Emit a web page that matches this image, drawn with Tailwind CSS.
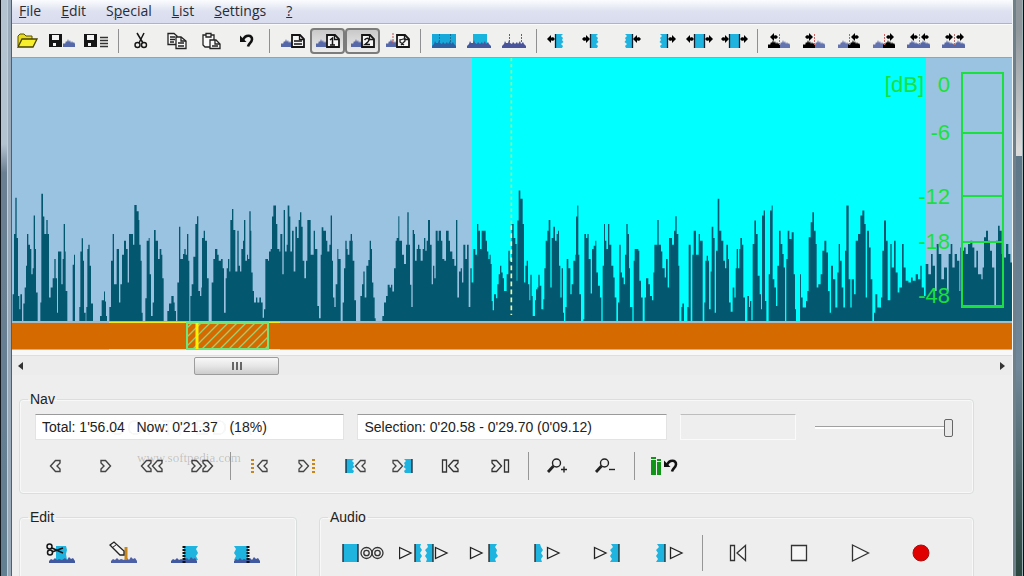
<!DOCTYPE html>
<html lang="en">
<head>
    <meta charset="UTF-8">
    <meta name="viewport" content="width=device-width, initial-scale=1.0">
    <title>Audio Editor</title>
    <script src="https://cdn.jsdelivr.net/npm/@tailwindcss/browser@4"></script>
</head>
<body class="h-screen overflow-hidden bg-[#eeeeee] font-['Liberation_Sans',Arial,sans-serif] text-[#222222]">

    <!-- Shared icon parts -->
    <svg class="absolute w-0 h-0" aria-hidden="true">
        <defs>
            <path id="wave" d="M0 8V5L1 4L2 5L3 2L4 3L5 0L6 3L7 1L8 4L9 2L10 4L11 3L12 5V8Z"/>
            <path id="wave-wide" d="M0 8V6L2 4L3 1L4 3L6 3L7 0L8 3L10 4L11 2L13 4L15 2L16 4L18 1L19 4L21 2L22 4L24 6V8Z"/>
            <path id="wave-low" d="M0 7V5L2 3L4 4L6 2L8 4L10 3L13 4L16 2L18 4L20 1L22 3L24 2L26 5V7Z"/>
            <path id="arrow-l" d="M0 4L4 0V2.500H5L6 2L8 4L6 6L5 5.500H4V8Z"/>
            <path id="arrow-r" d="M8 4L4 0V2.500H3L2 2L0 4L2 6L3 5.500H4V8Z"/>
            <path id="block-r" d="M0 0H8L6 2L8 4L7 6L8.500 8L6 10L8 12L7 14H0Z"/>
            <path id="block-l" d="M9 0H1L3 2L1 4L2 6L0.500 8L3 10L1 12L2 14H9Z"/>
            <path id="chev-l" d="M0.500 6L5.500 0.500H10V3L7 6L10 9V11.500H5.500Z"/>
            <path id="chev-r" d="M10.500 6L5.500 0.500H1V3L4 6L1 9V11.500H5.500Z"/>
            <path id="play" d="M0.500 0.500L12 6L0.500 11.500Z"/>
            <g id="undo">
                <path d="M0 1.500V8H6.500Z" fill="#111"/>
                <path d="M3 6C5 0.500 12.500 0.500 12 5.500C11.800 8.500 8.500 9.500 8 12.500" fill="none" stroke="#111" stroke-width="2.600"/>
            </g>
            <g id="floppy">
                <path d="M0 0H13V13H0Z" fill="#151515"/>
                <path d="M3 1H10V6H3ZM4 9H7V12H4Z" fill="#f4f4f4"/>
            </g>
            <g id="page">
                <path d="M1 1H9L13 5V13H1Z" fill="#f6f6f6" stroke="#151515" stroke-width="1.800"/>
                <path d="M8.500 1V5.500H13" fill="none" stroke="#151515" stroke-width="1.300"/>
            </g>
        </defs>
    </svg>

    <div class="flex h-full">
        <!-- Left window frame -->
        <div class="w-3 shrink-0 flex border-l border-[#10161c]">
            <div class="grow bg-linear-to-b from-[#b4c3d0] from-25% via-[#6b7f92] via-30% to-[#637f92]"></div>
            <div class="w-1 bg-[#9aaab8] border-l border-[#c3d0da]"></div>
            <div class="w-px bg-[#4f5f6c]"></div>
        </div>

        <div class="grow min-w-0">
            <!-- Menu bar -->
            <nav class="h-6 flex items-start gap-5 pl-[7px] border-b border-[#b3b3bb] bg-linear-to-b from-[#fbfcfe] via-[#dde1f0] to-[#d8dcee] font-['Open_Sans',sans-serif] text-sm leading-[22px] text-[#2b2b33]">
                <button><u>F</u>ile</button>
                <button><u>E</u>dit</button>
                <button>S<u>p</u>ecial</button>
                <button><u>L</u>ist</button>
                <button><u>S</u>ettings</button>
                <button><u>?</u></button>
            </nav>

            <!-- Toolbar -->
            <div class="h-[33px] flex items-center bg-[#f0f0ee] border-t border-[#fafafa]">
                <button class="w-[31px] flex justify-center" aria-label="Open"><svg class="w-7 h-[18px]" viewBox="0 0 28 18">
                    <path d="M4 14V4L6 2H10L12 4H18V7" fill="#e8dc18" stroke="#5b5200"/><path d="M4 15L8 7H23L19 15Z" fill="#f7ef2c" stroke="#4a4300" stroke-width="1.300"/></svg></button>
                <button class="w-[35px] flex justify-center" aria-label="Save wave"><svg class="w-7 h-[18px]" viewBox="0 0 28 18">
                    <use href="#floppy" x="2" y="2"/><use href="#wave" x="16" y="7" fill="#5668a8"/></svg></button>
                <button class="w-[35px] flex justify-center" aria-label="Save list"><svg class="w-7 h-[18px]" viewBox="0 0 28 18">
                    <use href="#floppy" x="2" y="2"/><path d="M18 5.500H26M18 8.500H26M18 11.500H26M18 14.500H26" stroke="#333" stroke-width="1.300"/></svg></button>
                <div class="w-[11px] flex justify-center"><span class="w-px h-6 bg-[#909090]"></span></div>
                <button class="w-[35px] flex justify-center" aria-label="Cut"><svg class="w-7 h-[18px]" viewBox="0 0 28 18" fill="none" stroke="#151515">
                    <path d="M9 1L15 11M16 1L11 11" stroke-width="1.500"/><circle cx="9.500" cy="13" r="2.500" stroke-width="1.400"/><circle cx="16" cy="13" r="2.500" stroke-width="1.400"/></svg></button>
                <button class="w-[35px] flex justify-center" aria-label="Copy"><svg class="w-7 h-[18px]" viewBox="0 0 28 18" fill="#f8f8f8" stroke="#222" stroke-width="1.300">
                    <path d="M5 1.500H11L14 4V12.500H5Z"/><path d="M7 5H12M7 7.500H12M7 10H11"/><path d="M13 5H18L23 9V16.500H13Z"/><path d="M18 5V9H23M15 11H21M15 14H21" fill="none"/></svg></button>
                <button class="w-[35px] flex justify-center" aria-label="Paste"><svg class="w-7 h-[18px]" viewBox="0 0 28 18" fill="#f8f8f8" stroke="#222" stroke-width="1.300">
                    <path d="M5 3H16V15H7L5 13Z"/><path d="M8 1.500H13V5H8Z"/><path d="M12 8H18L22 12V16.500H12Z"/><path d="M17 8V12H22M14 14H20" fill="none"/></svg></button>
                <button class="w-[35px] flex justify-center" aria-label="Undo"><svg class="w-7 h-[18px]" viewBox="0 0 28 18">
                    <use href="#undo" x="7" y="2"/></svg></button>
                <div class="w-[11px] flex justify-center"><span class="w-px h-6 bg-[#909090]"></span></div>
                <button class="w-[35px] flex justify-center" aria-label="Show list"><svg class="w-7 h-[18px]" viewBox="0 0 28 18">
                    <use href="#wave" x="2" y="7" fill="#5668a8"/><use href="#page" x="12" y="2"/><path d="M15 9H23M15 12H23" stroke="#151515" stroke-width="1.300"/></svg></button>
                <button class="w-[35px] h-[26px] flex justify-center items-center rounded border-2 border-[#7c7c7c] bg-linear-to-b from-[#c9c9c9] to-[#ececec]" aria-label="List 1" aria-pressed="true"><svg class="w-7 h-[18px]" viewBox="0 0 28 18">
                    <use href="#wave" x="2" y="7" fill="#5668a8"/><use href="#page" x="12" y="2"/><path d="M16 8L18.500 6V13M16 13H21" fill="none" stroke="#151515" stroke-width="1.500"/></svg></button>
                <button class="w-[35px] h-[26px] flex justify-center items-center rounded border-2 border-[#7c7c7c] bg-linear-to-b from-[#c9c9c9] to-[#ececec]" aria-label="List 2" aria-pressed="true"><svg class="w-7 h-[18px]" viewBox="0 0 28 18">
                    <use href="#wave" x="2" y="7" fill="#5668a8"/><use href="#page" x="12" y="2"/><path d="M15.500 8Q18 5 20 7.500Q20 9.500 16 12.500H21" fill="none" stroke="#151515" stroke-width="1.500"/></svg></button>
                <button class="w-[35px] flex justify-center" aria-label="Find in list"><svg class="w-7 h-[18px]" viewBox="0 0 28 18">
                    <use href="#wave" x="2" y="7" fill="#5668a8"/><path d="M9 1V12" stroke="#c05050" stroke-dasharray="2 1"/><use href="#page" x="12" y="2"/><path d="M16 7V10L20 13M16 8L21 6.500V9L17 13" fill="none" stroke="#222" stroke-width="1.300"/></svg></button>
                <div class="w-[11px] flex justify-center"><span class="w-px h-6 bg-[#909090]"></span></div>
                <button class="w-[35px] flex justify-center" aria-label="Select all"><svg class="w-7 h-[18px]" viewBox="0 0 28 18">
                    <path d="M2 2H26V16H2Z" fill="#17a9d9"/><path d="M9.500 2V12M20.500 2V12" stroke="#186f93" stroke-dasharray="2 1"/><use href="#wave-wide" x="2" y="8" fill="#2c62a4"/></svg></button>
                <button class="w-[35px] flex justify-center" aria-label="Select between marks"><svg class="w-7 h-[18px]" viewBox="0 0 28 18">
                    <path d="M8 2H22V14H8Z" fill="#17b4de"/><use href="#wave-wide" x="2" y="8" fill="#41599f"/></svg></button>
                <button class="w-[35px] flex justify-center" aria-label="Select none"><svg class="w-7 h-[18px]" viewBox="0 0 28 18">
                    <path d="M9.500 2V11M21.500 2V11" stroke="#b04545" stroke-dasharray="2 1"/><use href="#wave-wide" x="2" y="8" fill="#49549a"/></svg></button>
                <div class="w-[11px] flex justify-center"><span class="w-px h-6 bg-[#909090]"></span></div>
                <button class="w-[35px] flex justify-center" aria-label="Selection start left"><svg class="w-7 h-[18px]" viewBox="0 0 28 18">
                    <use href="#arrow-l" x="1" y="3"/><use href="#block-r" x="9" y="2" fill="#1fb4e0"/><path d="M9.500 2V16" stroke="#123" stroke-width="1.300"/></svg></button>
                <button class="w-[35px] flex justify-center" aria-label="Selection start right"><svg class="w-7 h-[18px]" viewBox="0 0 28 18">
                    <use href="#arrow-r" x="1" y="3"/><use href="#block-r" x="9" y="2" fill="#1fb4e0"/><path d="M9.500 2V16" stroke="#123" stroke-width="1.300"/></svg></button>
                <button class="w-[35px] flex justify-center" aria-label="Selection end left"><svg class="w-7 h-[18px]" viewBox="0 0 28 18">
                    <use href="#block-l" x="8" y="2" fill="#1fb4e0"/><path d="M16.500 2V16" stroke="#123" stroke-width="1.300"/><use href="#arrow-l" x="17" y="3"/></svg></button>
                <button class="w-[35px] flex justify-center" aria-label="Selection end right"><svg class="w-7 h-[18px]" viewBox="0 0 28 18">
                    <use href="#block-l" x="8" y="2" fill="#1fb4e0"/><path d="M16.500 2V16" stroke="#123" stroke-width="1.300"/><use href="#arrow-r" x="17" y="3"/></svg></button>
                <button class="w-[35px] flex justify-center" aria-label="Selection left"><svg class="w-7 h-[18px]" viewBox="0 0 28 18">
                    <use href="#arrow-l" x="0" y="3"/><path d="M8.500 2H18.500V16H8.500Z" fill="#1fb4e0"/><path d="M8.500 2V16M18.500 2V16" stroke="#123" stroke-width="1.300"/><use href="#arrow-r" x="19" y="3"/></svg></button>
                <button class="w-[35px] flex justify-center" aria-label="Selection right"><svg class="w-7 h-[18px]" viewBox="0 0 28 18">
                    <use href="#arrow-r" x="0" y="3"/><path d="M8.500 2H18.500V16H8.500Z" fill="#1fb4e0"/><path d="M8.500 2V16M18.500 2V16" stroke="#123" stroke-width="1.300"/><use href="#arrow-r" x="19" y="3"/></svg></button>
                <div class="w-[11px] flex justify-center"><span class="w-px h-6 bg-[#909090]"></span></div>
                <button class="w-[35px] flex justify-center" aria-label="Fade before, left"><svg class="w-7 h-[18px]" viewBox="0 0 28 18">
                    <use href="#wave" x="11" y="8" fill="#6474b0"/><use href="#wave" x="1" y="8"/><path d="M12.500 2V13" stroke="#d06060" stroke-dasharray="2 1"/><use href="#arrow-l" x="3" y="1"/></svg></button>
                <button class="w-[35px] flex justify-center" aria-label="Fade before, right"><svg class="w-7 h-[18px]" viewBox="0 0 28 18">
                    <use href="#wave" x="11" y="8" fill="#6474b0"/><use href="#wave" x="1" y="8"/><path d="M12.500 2V13" stroke="#d06060" stroke-dasharray="2 1"/><use href="#arrow-r" x="3" y="1"/></svg></button>
                <button class="w-[35px] flex justify-center" aria-label="Fade after, left"><svg class="w-7 h-[18px]" viewBox="0 0 28 18">
                    <use href="#wave" x="1" y="8" fill="#6474b0"/><use href="#wave" x="11" y="8"/><path d="M12.500 2V13" stroke="#d06060" stroke-dasharray="2 1"/><use href="#arrow-l" x="14" y="1"/></svg></button>
                <button class="w-[35px] flex justify-center" aria-label="Fade after, right"><svg class="w-7 h-[18px]" viewBox="0 0 28 18">
                    <use href="#wave" x="1" y="8" fill="#6474b0"/><use href="#wave" x="11" y="8"/><path d="M12.500 2V13" stroke="#d06060" stroke-dasharray="2 1"/><use href="#arrow-r" x="14" y="1"/></svg></button>
                <button class="w-[35px] flex justify-center" aria-label="Move mark left"><svg class="w-7 h-[18px]" viewBox="0 0 28 18">
                    <use href="#wave" x="0" y="8" fill="#5668a8"/><use href="#wave" x="11" y="8" fill="#5668a8"/><path d="M12.500 2V13" stroke="#b07070" stroke-dasharray="2 1"/><use href="#arrow-l" x="3" y="1"/><use href="#arrow-l" x="14" y="1"/></svg></button>
                <button class="w-[35px] flex justify-center" aria-label="Move mark right"><svg class="w-7 h-[18px]" viewBox="0 0 28 18">
                    <use href="#wave" x="0" y="8" fill="#5668a8"/><use href="#wave" x="11" y="8" fill="#5668a8"/><path d="M12.500 2V13" stroke="#b07070" stroke-dasharray="2 1"/><use href="#arrow-r" x="3" y="1"/><use href="#arrow-r" x="14" y="1"/></svg></button>
            </div>

            <!-- Waveform -->
            <div class="relative border-t border-[#8fa5b0]">
                <svg class="block w-full h-[263px]" viewBox="0 0 3000 786" preserveAspectRatio="none">
                    <rect width="3000" height="786" fill="#9ac3e2"/>
                    <rect x="1380" width="1362" height="786" fill="#00ffff"/>
                    <path id="peaks" fill="#03586f"/>
                    <path d="M1498 0V500" stroke="#8ff590" stroke-width="5" stroke-dasharray="10 8"/>
                    <path d="M1498 500V768" stroke="#f5f7a0" stroke-width="5" stroke-dasharray="14 10"/>
                </svg>
                <!-- Level meter scale -->
                <div class="absolute inset-y-0 right-0 w-32 text-[22px] leading-6 text-[#19e03f]">
                    <span class="absolute right-[88px] top-[15px]">[dB]</span>
                    <span class="absolute right-[62px] top-[15px]">0</span>
                    <span class="absolute right-[62px] top-[63px]">-6</span>
                    <span class="absolute right-[62px] top-[127px]">-12</span>
                    <span class="absolute right-[62px] top-[172px]">-18</span>
                    <span class="absolute right-[62px] top-[226px]">-48</span>
                    <svg class="absolute right-2 top-[14px] w-[43px] h-[237px]" viewBox="0 0 43 237" fill="none" stroke="#19e03f" stroke-width="2">
                        <path d="M1 1H42V235H1ZM1 61H42M1 124H42M1 170H42M1 234H42"/>
                    </svg>
                </div>
            </div>

            <!-- Overview strip -->
            <div class="pt-[2px] pb-px bg-[#a9b9bd]">
                <svg class="block w-full h-[26px] overflow-visible bg-[#d46a00]" viewBox="0 0 1000 26" preserveAspectRatio="none">
                    <defs>
                        <pattern id="hatch" width="9" height="9" patternUnits="userSpaceOnUse">
                            <path d="M-1 10L10 -1M-1 1L1 -1M8 10L10 8" stroke="#9fd070" stroke-width="1.300"/>
                        </pattern>
                    </defs>
                    <path d="M97 -0.500H268M97 26.500H268" stroke="#f3ea1c"/>
                    <rect x="175" y="0" width="81" height="26" fill="url(#hatch)" stroke="#6fe57c" stroke-width="2"/>
                    <path d="M185 0V26" stroke="#ffef00" stroke-width="3"/>
                </svg>
            </div>

            <!-- Scrollbar -->
            <div class="border-t-[5px] border-[#f8f8f8]">
                <div class="h-5 flex items-center border-t border-[#dedede] bg-[#ececec]">
                    <button class="w-4 flex justify-center" aria-label="Scroll left"><svg class="w-2 h-2" viewBox="0 0 8 8"><path d="M2 4L7 0V8Z" fill="#333"/></svg></button>
                    <div class="grow grid grid-cols-[166fr_85fr_717fr]">
                        <button class="col-start-2 h-[18px] flex justify-center items-center gap-[2px] rounded-xs border border-[#9c9c9c] bg-linear-to-b from-[#f8f8f8] via-[#e6e6e6] to-[#cccccc]" aria-label="Scroll">
                            <span class="w-[2px] h-2 bg-[#666666]"></span><span class="w-[2px] h-2 bg-[#666666]"></span><span class="w-[2px] h-2 bg-[#666666]"></span>
                        </button>
                    </div>
                    <button class="w-4 flex justify-center" aria-label="Scroll right"><svg class="w-2 h-2" viewBox="0 0 8 8"><path d="M5 4L0 0V8Z" fill="#333"/></svg></button>
                </div>
            </div>

            <div class="ml-[7px] mr-[38px] mt-4">
                <!-- Nav group -->
                <fieldset class="relative h-[103px] rounded border border-[#d8dfdd] shadow-[inset_0_0_0_1px_#f8f8f8]">
                    <legend class="ml-2 px-[2px] text-sm leading-4">Nav</legend>
                    <div class="flex items-center gap-[13px] mt-[7px] pl-[15px] pr-5">
                        <input type="text" readonly aria-label="Position" value="Total: 1'56.04   Now: 0'21.37   (18%)" class="grow-[294] basis-0 min-w-0 h-[26px] px-[6px] bg-white border border-t-[#9a9a9a] border-[#e3e3e3] text-sm whitespace-pre">
                        <input type="text" readonly aria-label="Selection" value="Selection: 0'20.58 - 0'29.70 (0'09.12)" class="grow-[294] basis-0 min-w-0 h-[26px] px-[6px] bg-white border border-t-[#9a9a9a] border-[#e3e3e3] text-sm">
                        <input type="text" readonly aria-label="Status" class="grow-[114] basis-0 min-w-0 h-[26px] bg-[#eeeeee] border border-[#fafafa] border-t-[#bdbdbd]">
                        <input type="range" min="0" max="100" value="100" aria-label="Volume" class="ml-[6px] grow-[137] basis-0 min-w-0 h-5 appearance-none bg-transparent [&::-webkit-slider-runnable-track]:h-[3px] [&::-webkit-slider-runnable-track]:bg-white [&::-webkit-slider-runnable-track]:border-t [&::-webkit-slider-runnable-track]:border-[#a0a0a0] [&::-webkit-slider-thumb]:appearance-none [&::-webkit-slider-thumb]:w-[9px] [&::-webkit-slider-thumb]:h-[18px] [&::-webkit-slider-thumb]:-mt-2 [&::-webkit-slider-thumb]:rounded-xs [&::-webkit-slider-thumb]:border [&::-webkit-slider-thumb]:border-[#666666] [&::-webkit-slider-thumb]:bg-[#e9e9e9]">
                    </div>
                    <div class="absolute left-[90px] top-[9px] text-[22px] leading-6 tracking-widest text-black/5">SOFTPEDIA</div>
                    <div class="absolute left-[117px] top-[43px] font-['Liberation_Serif',serif] text-[13px] leading-4 text-black/20">www.softpedia.com</div>
                    <div class="flex items-center pl-[13px] mt-3 h-7">
                        <button class="w-12 flex justify-center" aria-label="Back"><svg class="w-8 h-[18px]" viewBox="0 0 32 18" fill="#eee" stroke="#444" stroke-width="1.400"><use href="#chev-l" x="9" y="3"/></svg></button>
                        <button class="w-12 flex justify-center" aria-label="Forward"><svg class="w-8 h-[18px]" viewBox="0 0 32 18" fill="#eee" stroke="#444" stroke-width="1.400"><use href="#chev-r" x="11" y="3"/></svg></button>
                        <button class="w-12 flex justify-center" aria-label="Fast back"><svg class="w-8 h-[18px]" viewBox="0 0 32 18" fill="#eee" stroke="#444" stroke-width="1.400"><use href="#chev-l" x="4" y="3"/><use href="#chev-l" x="15" y="3"/></svg></button>
                        <button class="w-12 flex justify-center" aria-label="Fast forward"><svg class="w-8 h-[18px]" viewBox="0 0 32 18" fill="#eee" stroke="#444" stroke-width="1.400"><use href="#chev-r" x="6" y="3"/><use href="#chev-r" x="17" y="3"/></svg></button>
                        <div class="w-[10px] flex justify-center"><span class="w-px h-7 bg-[#969696]"></span></div>
                        <button class="w-12 flex justify-center" aria-label="Previous mark"><svg class="w-8 h-[18px]" viewBox="0 0 32 18" fill="#eee" stroke="#444" stroke-width="1.300"><path d="M9.500 2V17" stroke="#c8861a" stroke-width="3" stroke-dasharray="2 2"/><use href="#chev-l" x="14" y="3"/></svg></button>
                        <button class="w-12 flex justify-center" aria-label="Next mark"><svg class="w-8 h-[18px]" viewBox="0 0 32 18" fill="#eee" stroke="#444" stroke-width="1.300"><use href="#chev-r" x="7" y="3"/><path d="M22.500 2V17" stroke="#c8861a" stroke-width="3" stroke-dasharray="2 2"/></svg></button>
                        <button class="w-12 flex justify-center" aria-label="To selection start"><svg class="w-8 h-[18px]" viewBox="0 0 32 18" fill="#eee" stroke="#444" stroke-width="1.300"><use href="#block-r" x="7" y="2" fill="#1fb4e0" stroke="none"/><path d="M7 2V16" stroke="#123"/><use href="#chev-l" x="16" y="3"/></svg></button>
                        <button class="w-12 flex justify-center" aria-label="To selection end"><svg class="w-8 h-[18px]" viewBox="0 0 32 18" fill="#eee" stroke="#444" stroke-width="1.300"><use href="#chev-r" x="5" y="3"/><use href="#block-l" x="16" y="2" fill="#1fb4e0" stroke="none"/><path d="M25 2V16" stroke="#123"/></svg></button>
                        <button class="w-12 flex justify-center" aria-label="To start"><svg class="w-8 h-[18px]" viewBox="0 0 32 18" fill="#eee" stroke="#333" stroke-width="1.300"><path d="M7.500 3H11.500V15H7.500Z"/><use href="#chev-l" x="13" y="3"/></svg></button>
                        <button class="w-12 flex justify-center" aria-label="To end"><svg class="w-8 h-[18px]" viewBox="0 0 32 18" fill="#eee" stroke="#333" stroke-width="1.300"><use href="#chev-r" x="8" y="3"/><path d="M21.500 3H25.500V15H21.500Z"/></svg></button>
                        <div class="w-[10px] flex justify-center"><span class="w-px h-7 bg-[#969696]"></span></div>
                        <button class="w-12 flex justify-center" aria-label="Zoom in"><svg class="w-8 h-[18px]" viewBox="0 0 32 18" fill="none" stroke="#222"><circle cx="15.500" cy="6" r="4" stroke-width="1.400"/><path d="M12.500 9L7 15" stroke-width="2.800"/><path d="M20 12.500H26M23 9.500V15.500" stroke-width="1.400"/></svg></button>
                        <button class="w-12 flex justify-center" aria-label="Zoom out"><svg class="w-8 h-[18px]" viewBox="0 0 32 18" fill="none" stroke="#222"><circle cx="15.500" cy="6" r="4" stroke-width="1.400"/><path d="M12.500 9L7 15" stroke-width="2.800"/><path d="M20 12.500H26" stroke-width="1.400"/></svg></button>
                        <div class="w-[10px] flex justify-center"><span class="w-px h-7 bg-[#969696]"></span></div>
                        <button class="w-14 flex justify-center" aria-label="Reset level"><svg class="w-8 h-5" viewBox="0 0 32 20"><path d="M0 1H5V3H0ZM0 4H5V19H0ZM6 3H10V5H6ZM6 6H10V19H6Z" fill="#109518"/><use href="#undo" x="13" y="3"/></svg></button>
                    </div>
                </fieldset>

                <div class="flex gap-[22px] mt-[15px]">
                    <!-- Edit group -->
                    <fieldset class="w-[278px] h-[104px] shrink-0 rounded border border-[#d8dfdd] shadow-[inset_0_0_0_1px_#f8f8f8]">
                        <legend class="ml-2 px-[2px] text-sm leading-4">Edit</legend>
                        <div class="flex items-center pl-[10px] mt-[10px] h-9">
                            <button class="w-[62px] flex justify-center" aria-label="Cut selection"><svg class="w-8 h-6" viewBox="0 0 32 24"><path d="M11 5H21L22 9L21 13L22 19H11Z" fill="#1fb4e0"/><use href="#wave-low" x="4" y="15" fill="#41599f"/><g fill="none" stroke="#151515" stroke-width="1.500"><circle cx="4.500" cy="5.500" r="2.500"/><circle cx="5" cy="11.500" r="2.500"/><path d="M7 7L18 12M7 11L18 7"/></g></svg></button>
                            <button class="w-[62px] flex justify-center" aria-label="Edit mark"><svg class="w-8 h-6" viewBox="0 0 32 24"><use href="#wave-low" x="4" y="15" fill="#4d5fa5"/><path d="M19 6V19" stroke="#c8861a" stroke-width="3"/><path d="M3 4L7 1L17 10V14H13Z" fill="#f5f5f5" stroke="#222" stroke-width="1.300"/><path d="M5.500 6.500L9.500 3.500" stroke="#222"/></svg></button>
                            <button class="w-[62px] flex justify-center" aria-label="Crop left"><svg class="w-8 h-6" viewBox="0 0 32 24"><path d="M15 5H29L27 8L29 12L27 15L29 19H15Z" fill="#1fb4e0"/><use href="#wave-low" x="2" y="15" fill="#41599f"/><path d="M15 5V23" stroke="#111" stroke-width="3" stroke-dasharray="2 1"/></svg></button>
                            <button class="w-[62px] flex justify-center" aria-label="Crop right"><svg class="w-8 h-6" viewBox="0 0 32 24"><path d="M17 5H3L5 8L3 12L5 15L3 19H17Z" fill="#1fb4e0"/><use href="#wave-low" x="3" y="15" fill="#41599f"/><path d="M17 5V23" stroke="#111" stroke-width="3" stroke-dasharray="2 1"/></svg></button>
                        </div>
                    </fieldset>
                    <!-- Audio group -->
                    <fieldset class="grow h-[104px] rounded border border-[#d8dfdd] shadow-[inset_0_0_0_1px_#f8f8f8]">
                        <legend class="ml-2 px-[2px] text-sm leading-4">Audio</legend>
                        <div class="flex items-center pl-3 mt-[10px] h-9">
                            <button class="w-[61px] flex justify-center" aria-label="Loop selection"><svg class="w-[50px] h-5" viewBox="0 0 50 20"><path d="M5 1H20V19H5Z" fill="#1fb4e0"/><path d="M5 1V19M20 1V19" stroke="#123" stroke-width="1.300"/><g fill="none" stroke="#333" stroke-width="1.300"><circle cx="28.500" cy="10" r="5.500"/><circle cx="28.500" cy="10" r="2.700"/><circle cx="39.500" cy="10" r="5.500"/><circle cx="39.500" cy="10" r="2.700"/></g></svg></button>
                            <button class="w-[61px] flex justify-center" aria-label="Play around selection"><svg class="w-[50px] h-5" viewBox="0 0 50 20" stroke="#222" stroke-width="1.300" fill="#f2f2f2"><use href="#play" x="0" y="4"/><path d="M16 1H22L21 4L23 7L21 10L23 13L21 16L22 19H16ZM34 1H28L29 4L26 7L28 10L26 13L28 16L27 19H34Z" fill="#1fb4e0" stroke="none"/><path d="M16 1V19M34 1V19"/><use href="#play" x="36" y="4"/></svg></button>
                            <button class="w-[61px] flex justify-center" aria-label="Play to start"><svg class="w-[50px] h-5" viewBox="0 0 50 20" stroke="#222" stroke-width="1.300" fill="#f2f2f2"><use href="#play" x="10" y="4"/><path d="M29 1H37L35 4L37 7L36 10L38 13L35 16L36 19H29Z" fill="#1fb4e0" stroke="none"/><path d="M29 1V19"/></svg></button>
                            <button class="w-[61px] flex justify-center" aria-label="Play from start"><svg class="w-[50px] h-5" viewBox="0 0 50 20" stroke="#222" stroke-width="1.300" fill="#f2f2f2"><path d="M14 1H19L20 4L22 7L20 10L22 13L20 16L21 19H14Z" fill="#1fb4e0" stroke="none"/><path d="M14 1V19"/><use href="#play" x="26" y="4"/></svg></button>
                            <button class="w-[61px] flex justify-center" aria-label="Play to end"><svg class="w-[50px] h-5" viewBox="0 0 50 20" stroke="#222" stroke-width="1.300" fill="#f2f2f2"><use href="#play" x="12" y="4"/><path d="M37 1H29L31 4L28 7L30 10L28 13L30 16L28 19H37Z" fill="#1fb4e0" stroke="none"/><path d="M37 1V19"/></svg></button>
                            <button class="w-[61px] flex justify-center" aria-label="Play from end"><svg class="w-[50px] h-5" viewBox="0 0 50 20" stroke="#222" stroke-width="1.300" fill="#f2f2f2"><path d="M22 1H14L16 4L13 7L15 10L13 13L15 16L13 19H22Z" fill="#1fb4e0" stroke="none"/><path d="M22 1V19"/><use href="#play" x="27" y="4"/></svg></button>
                            <div class="w-[9px] flex justify-center"><span class="w-px h-9 bg-[#969696]"></span></div>
                            <button class="w-[61px] flex justify-center" aria-label="Rewind"><svg class="w-5 h-5" viewBox="0 0 20 20" fill="#f4f4f4" stroke="#333" stroke-width="1.300"><path d="M2.500 2.500H6.500V17.500H2.500ZM17.500 2.500V17.500L9 10Z"/></svg></button>
                            <button class="w-[61px] flex justify-center" aria-label="Stop"><svg class="w-5 h-5" viewBox="0 0 20 20" fill="#f6f6f6" stroke="#333" stroke-width="1.300"><path d="M2.500 2.500H17.500V17.500H2.500Z"/></svg></button>
                            <button class="w-[61px] flex justify-center" aria-label="Play"><svg class="w-5 h-5" viewBox="0 0 20 20" fill="#f6f6f6" stroke="#333" stroke-width="1.300"><path d="M2.500 2L18.500 10L2.500 18Z"/></svg></button>
                            <button class="w-[61px] flex justify-center" aria-label="Record"><svg class="w-5 h-5" viewBox="0 0 20 20"><circle cx="10" cy="10" r="8" fill="#e00000" stroke="#a51010"/></svg></button>
                        </div>
                    </fieldset>
                </div>
            </div>
        </div>

        <!-- Right window frame -->
        <div class="w-3 shrink-0 flex">
            <div class="w-px bg-[#f4f8fa]"></div>
            <div class="w-[3px] bg-[#6f8088]"></div>
            <div class="grow bg-linear-to-b from-[#8f979c] from-5% via-[#dadada] via-26% to-[#dadada] to-26% flex flex-col justify-end">
                <div class="h-[73%] bg-linear-to-b from-[#5d7688] via-[#71889a] to-[#2c4640]"></div>
            </div>
            <div class="w-px bg-[#9fb0b4]"></div>
            <div class="w-px bg-[#0c1012]"></div>
        </div>
    </div>

    <script>
        // Peak steps as "x:top" pairs; every block has its own origin in the viewBox
        const blocks = [
            { x: -36, y: 366, steps: '38:340 42:160 46:52 50:172 54:345 58:385 61:340 66:420 70:368 74:320 78:255 81:160 85:192 90:205 94:280 98:262 101:105 105:205 108:335 113:420 121:365 124:40 129:108 133:160 139:118 143:160 147:350 152:320 158:292 163:235 167:292 171:395 174:212 184:310 188:235 191:130 195:212 197:330 202:420 218:252 222:222 225:420 238:378 241:212 245:173 249:240 252:395 257:420 259:378 262:205 265:192 269:255 273:368 279:420 300:405 305:358 312:332 315:362 318:405 321:420 328:378 333:240 338:160 342:310 350:205 357:365 361:310 366:222 372:180 378:205 383:305 387:160 399:192 403:73 410:92 416:118 418:192 422:240 425:395 428:420 436:352 440:180 446:172 449:280 453:405 458:365 462:148 467:180 474:235 479:205 484:222 487:292 491:420 502:390 507:368 514:345 521:365 524:390 528:420 532:305 537:138 541:235 549:220 553:205 557:222 561:160 565:240 568:420 571:345 575:310 580:228 586:130 591:107 595:330 600:345 604:320 606:172 611:150 615:180 621:292 626:420 635:305 640:235 645:205 652:222 656:240 663:235 668:262 672:395 677:292 680:262 684:235 688:272 691:118 696:85 700:148 706:272 712:150 716:255 720:272 724:205 729:180 732:118 736:240 741:222 744:235 748:92' },
            { x: 714, y: 366, steps: '2:150 4:275 8:330 12:365 18:350 22:365 28:350 33:365 38:410 42:385 46:235 54:240 57:212 62:205 66:108 70:75 78:130 82:205 88:212 91:160 97:280 101:88 105:212 110:192 113:75 118:108 121:212 126:150 131:272 136:138 141:172 146:118 150:95 154:138 158:240 163:292 168:240 172:118 182:222 191:150 195:205 202:375 207:412 212:222 215:140 220:150 228:180 232:212 238:192 242:105 246:240 249:350 253:378 257:310 262:205 265:235 272:420 278:365 282:262 286:180 290:205 293:222 298:180 302:160 306:180 308:240 313:358 318:420 331:345 336:310 340:272 344:350 349:255 355:238 359:180 363:205 366:305 370:350 374:412 377:420 397:405 402:365 408:345 413:312 419:320 423:312 427:332 432:262 437:180 440:172 445:107 448:180 456:222 462:250 468:192 472:95 476:192 480:312 484:378 488:148 492:160 495:240 500:205 504:192 508:205 512:240 518:205 522:172 526:210 530:180 534:118 540:192 545:310 549:255 553:292 557:150 563:180 566:150 573:180 577:235 583:240 588:150 596:180 600:212 607:235 613:255 618:118 622:350 627:272 632:262 636:305 640:192 646:235 651:192 656:378 661:262 665:305 670:205 676:222 681:130 685:150 690:205 695:150 707:180 711:212 715:235 719:222 722:250 725:360 728:388 732:340 738:352 742:310 746:280' },
            { x: 1464, y: 366, steps: '0:255 4:275 8:292 12:330 20:280 25:210 29:240 35:130 41:172 46:190 50:300 52:120 56:30 61:55 68:130 72:305 76:255 80:240 84:310 88:358 91:282 95:345 98:405 105:358 108:325 112:320 115:282 119:315 124:385 130:355 133:262 137:180 142:150 146:118 151:320 155:172 160:138 165:180 170:160 174:150 177:255 181:350 185:262 189:395 192:420 196:378 200:235 205:262 211:340 215:310 220:240 226:222 228:108 232:75 235:222 238:340 243:420 250:415 253:160 258:172 262:160 266:235 272:338 276:205 281:195 286:180 289:275 294:315 300:350 304:420 308:255 312:130 315:180 319:205 324:130 328:192 334:255 340:290 344:350 349:420 354:365 358:192 362:275 366:290 371:310 375:222 379:130 383:160 387:262 390:378 397:420 401:240 404:205 415:210 418:300 423:350 428:420 434:350 438:292 445:310 450:345 456:358 460:275 463:192 472:118 476:192 483:212 487:262 494:290 498:235 503:320 507:172 516:192 522:150 526:107 530:160 535:255 538:420 544:378 547:368 552:420 562:378 566:192 572:420 577:222 581:150 588:222 596:160 600:180 608:420 613:365 616:240 620:225 624:240 627:385 632:272 635:138 640:172 644:395 648:210 653:55 658:150 664:180 670:240 675:262 679:192 684:235 687:365 692:392 698:320 703:350 707:262 710:205 714:262 718:205 721:172 726:192 730:350 735:420 742:345 747:378' },
            { x: 2214, y: 6, steps: '0:720 4:778 8:550 13:480 18:520 23:645 29:700 33:745 36:465 41:450 45:720 49:780 56:640 60:450 65:435 68:655 73:680 78:735 82:615 87:510 92:550 97:580 101:620 105:780 109:595 113:510 118:535 125:515 131:640 135:745 138:780 150:640 153:710 158:740 168:720 172:690 176:530 182:485 187:455 192:510 197:550 200:680 205:670 212:640 217:570 223:540 229:575 234:690 239:755 243:615 249:655 256:740 262:635 266:550 270:600 275:680 280:740 285:570 289:435 296:655 301:740 305:655 312:700 317:540 324:520 331:465 337:450 343:490 347:710 351:510 357:560 362:655 367:780 372:755 376:700 382:740 393:710 397:570 402:480 408:540 413:718 421:550 425:620 432:540 437:635 443:695 448:680 456:550 461:620 467:660 475:665 483:650 488:660 497:640 504:655 511:615 515:680 522:705 527:610 535:640 543:580 548:615 555:690 560:550 566:580 574:655 582:620 591:690 596:580 602:550 607:620 614:580 621:600 628:690 631:560 636:570 642:560 647:580 654:550 661:540 667:560 673:620 679:570 684:640 694:655 698:620 702:530 708:510 714:540 720:570 726:620 733:740 738:540 744:495 749:510 755:580 762:590 768:550 775:580 781:605' },
        ];

        let d = 'M0 786';
        blocks.forEach(block => {
            block.steps.split(' ').forEach(step => {
                const [x, top] = step.split(':').map(Number);
                d += `H${x + block.x}V${top + block.y}`;
            });
        });
        document.getElementById('peaks').setAttribute('d', d + 'H3000V786Z');
    </script>
</body>
</html>
